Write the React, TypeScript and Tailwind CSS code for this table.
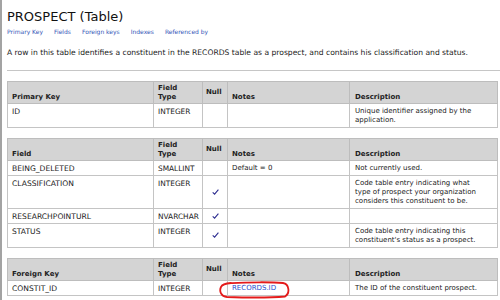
import * as React from 'react';

type Row = {
  name: string;
  type: string;
  nul?: boolean;
  notes?: React.ReactNode;
  desc?: string[];
};

const Check: React.FC = () => (
  <svg width="7" height="6" viewBox="0 0 7 6" className="inline-block">
    <path d="M0.7 3.3 L2.6 5.1 L6.4 0.7" fill="none" stroke="#2b2b8f" strokeWidth="1.1" />
  </svg>
);

const th = 'border border-[#bdbdbd] px-[4px] pt-[2px] pb-[1px] text-left align-bottom font-bold';
const td = 'border border-[#c4c4c4] px-[4px] pt-[3px] pb-[2px] align-top';

const DataTable: React.FC<{ first: string; rows: Row[] }> = ({ first, rows }) => (
  <table className="table-fixed w-[490px] border-collapse text-[7px] leading-[9px] text-[#222]">
    <colgroup>
      <col className="w-[146px]" />
      <col className="w-[49px]" />
      <col className="w-[25px]" />
      <col className="w-[122px]" />
      <col className="w-[148px]" />
    </colgroup>
    <thead>
      <tr className="bg-[#d4d4d4]">
        <th className={th}>{first}</th>
        <th className={th}>
          Field
          <br />
          Type
        </th>
        <th className="border border-[#bdbdbd] px-[3px] py-[2px] text-left align-middle font-bold">Null</th>
        <th className={th}>Notes</th>
        <th className={th + ' pl-[5px]'}>Description</th>
      </tr>
    </thead>
    <tbody>
      {rows.map((r, i) => (
        <tr key={i} className="bg-white">
          <td className={td + ' text-[7.6px]'}>{r.name}</td>
          <td className={td + ' text-[7.4px]'}>{r.type}</td>
          <td className="border border-[#c4c4c4] text-center align-middle">{r.nul && <Check />}</td>
          <td className={td + ' relative'}>{r.notes}</td>
          <td className={td + ' pl-[5px] whitespace-nowrap'}>
            {r.desc?.map((line, j) => (
              <div key={j}>{line}</div>
            ))}
          </td>
        </tr>
      ))}
    </tbody>
  </table>
);

const App: React.FC = () => {
  return (
    <div className="min-h-screen w-[500px] h-[300px] overflow-hidden bg-white border-l-2 border-[#a3a3a3] font-['DejaVu_Sans',sans-serif]">
      <div className="pl-[5px]">
        <h1 className="pt-[9px] text-[13px] leading-[16px] text-[#111]">PROSPECT (Table)</h1>
        <nav className="mt-[3px] flex gap-[11px] text-[6px] leading-[8px] text-[#3456b8]">
          <span>Primary Key</span>
          <span>Fields</span>
          <span>Foreign keys</span>
          <span>Indexes</span>
          <span>Referenced by</span>
        </nav>
        <p className="mt-[12px] text-[7.6px] leading-[9px] text-[#222] whitespace-nowrap">
          A row in this table identifies a constituent in the RECORDS table as a prospect, and contains his classification and status.
        </p>
        <div className="mt-[13px] h-px bg-[#c6c6c6]" />

        <div className="mt-[10px]">
          <DataTable
            first="Primary Key"
            rows={[{ name: 'ID', type: 'INTEGER', desc: ['Unique identifier assigned by the', 'application.'] }]}
          />
        </div>

        <div className="mt-[10px]">
          <DataTable
            first="Field"
            rows={[
              { name: 'BEING_DELETED', type: 'SMALLINT', notes: 'Default = 0', desc: ['Not currently used.'] },
              {
                name: 'CLASSIFICATION',
                type: 'INTEGER',
                nul: true,
                desc: ['Code table entry indicating what', 'type of prospect your organization', 'considers this constituent to be.'],
              },
              { name: 'RESEARCHPOINTURL', type: 'NVARCHAR', nul: true },
              {
                name: 'STATUS',
                type: 'INTEGER',
                nul: true,
                desc: ['Code table entry indicating this', "constituent's status as a prospect."],
              },
            ]}
          />
        </div>

        <div className="mt-[10px]">
          <DataTable
            first="Foreign Key"
            rows={[
              {
                name: 'CONSTIT_ID',
                type: 'INTEGER',
                notes: (
                  <>
                    <span className="text-[#2a4fd0]">RECORDS.ID</span>
                    <svg
                      width="74"
                      height="18"
                      viewBox="0 0 74 18"
                      className="absolute left-[-10px] top-[0px] pointer-events-none"
                    >
                      <path
                        d="M14 2.2 C30 1 55 1 65 2 C71 3 72.5 12 67 15.5 C50 17 25 16.5 9 16 C3 15.5 1 10 3 6 C4 3.5 7 2.5 13 2"
                        fill="none"
                        stroke="#e41b1b"
                        strokeWidth="1.8"
                        strokeLinecap="round"
                      />
                    </svg>
                  </>
                ),
                desc: ['The ID of the constituent prospect.'],
              },
            ]}
          />
        </div>
      </div>
    </div>
  );
};

export default App;
